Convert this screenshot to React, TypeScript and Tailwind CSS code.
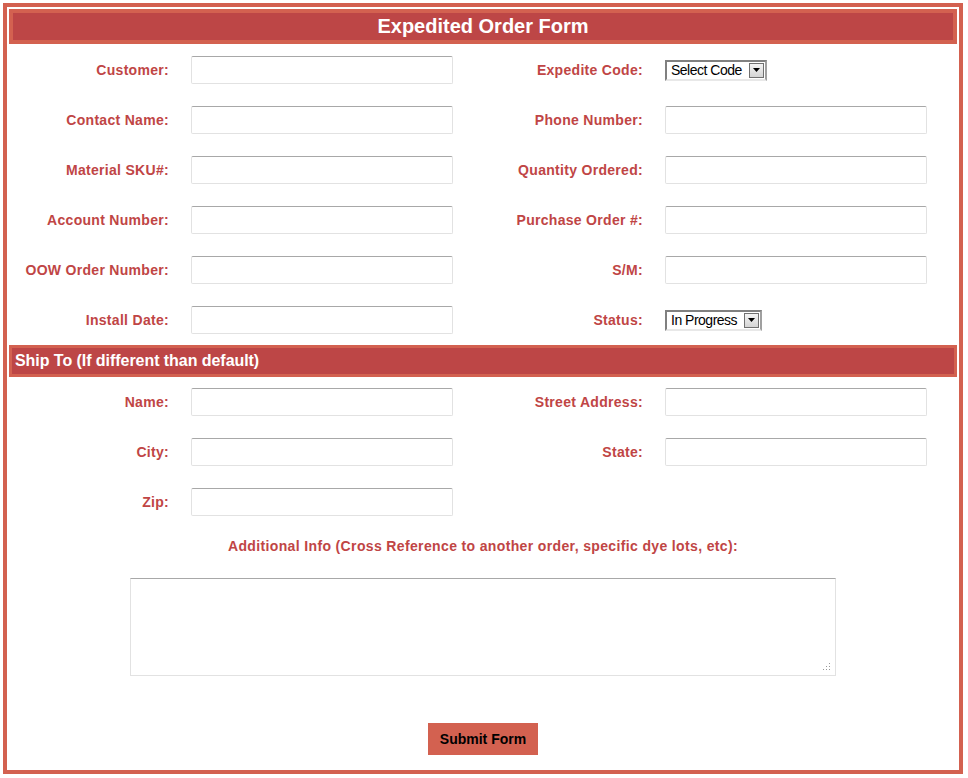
import React from "react";

const font = { fontFamily: '"Liberation Sans", Arial, sans-serif' };

function Input() {
  return (
    <div className="h-[28px] w-[262px] rounded-[2px] border border-[#e2e2e2] border-t-[#a8a8a8] bg-white" />
  );
}

function FakeSelect({ text, w }: { text: string; w: string }) {
  return (
    <div className={`flex h-[21px] items-center border-2 border-[#808080] border-b-[#e8e8e8] border-r-[#a0a0a0] bg-white ${w}`}>
      <span className="flex-1 pl-[4px] text-[14px] leading-none tracking-[-0.5px] text-black">{text}</span>
      <div className="mr-[1px] flex h-[15px] w-[15px] items-center justify-center border border-[#707070] bg-gradient-to-b from-[#f4f4f4] to-[#d4d4d4]">
        <svg width="7" height="4" viewBox="0 0 7 4"><path d="M0 0h7L3.5 4z" fill="#000" /></svg>
      </div>
    </div>
  );
}

function Field({ label, children }: { label: string; children?: React.ReactNode }) {
  return (
    <div className="flex h-[28px] w-[474px] items-center">
      <div className="w-[160px] text-right text-[14px] font-bold tracking-[0.3px] text-[#c04545]">{label}</div>
      <div className="ml-[22px] flex items-center">{children}</div>
    </div>
  );
}

function Row({ children }: { children: React.ReactNode }) {
  return <div className="flex">{children}</div>;
}

export default function App() {
  return (
    <div className="bg-white" style={font}>
      <div className="ml-[3px] mt-[3px] flex h-[771px] w-[960px] flex-col border-4 border-[#d36150] bg-white p-[2px]">
        <div className="flex h-[35px] items-center justify-center border-4 border-[#d36150] bg-[#bd4646] pb-[2px] text-[20px] font-bold text-white">
          Expedited Order Form
        </div>
        <div className="mt-[12px] flex flex-col gap-[22px]">
          <Row>
            <Field label="Customer:"><Input /></Field>
            <Field label="Expedite Code:"><FakeSelect text="Select Code" w="w-[102px]" /></Field>
          </Row>
          <Row>
            <Field label="Contact Name:"><Input /></Field>
            <Field label="Phone Number:"><Input /></Field>
          </Row>
          <Row>
            <Field label="Material SKU#:"><Input /></Field>
            <Field label="Quantity Ordered:"><Input /></Field>
          </Row>
          <Row>
            <Field label="Account Number:"><Input /></Field>
            <Field label="Purchase Order #:"><Input /></Field>
          </Row>
          <Row>
            <Field label="OOW Order Number:"><Input /></Field>
            <Field label="S/M:"><Input /></Field>
          </Row>
          <Row>
            <Field label="Install Date:"><Input /></Field>
            <Field label="Status:"><FakeSelect text="In Progress" w="w-[97px]" /></Field>
          </Row>
        </div>
        <div className="mt-[11px] flex h-[32px] items-center border-[3px] border-[#d36150] bg-[#bd4646] pl-[3px] text-[16px] font-bold tracking-[-0.05px] text-white">
          Ship To (If different than default)
        </div>
        <div className="mt-[11px] flex flex-col gap-[22px]">
          <Row>
            <Field label="Name:"><Input /></Field>
            <Field label="Street Address:"><Input /></Field>
          </Row>
          <Row>
            <Field label="City:"><Input /></Field>
            <Field label="State:"><Input /></Field>
          </Row>
          <Row>
            <Field label="Zip:"><Input /></Field>
          </Row>
        </div>
        <div className="mt-[20px] text-center text-[14px] font-bold tracking-[0.36px] text-[#c04545]">
          Additional Info (Cross Reference to another order, specific dye lots, etc):
        </div>
        <div className="mt-[21px] flex justify-center">
          <div className="relative h-[98px] w-[706px] border border-[#e2e2e2] border-t-[#a8a8a8]">
            <svg className="absolute bottom-[4px] right-[4px]" width="8" height="8" viewBox="0 0 8 8">
              <rect x="6" y="0" width="1" height="1" fill="#999" />
              <rect x="3" y="3" width="1" height="1" fill="#999" />
              <rect x="6" y="3" width="1" height="1" fill="#999" />
              <rect x="0" y="6" width="1" height="1" fill="#999" />
              <rect x="3" y="6" width="1" height="1" fill="#999" />
              <rect x="6" y="6" width="1" height="1" fill="#999" />
            </svg>
          </div>
        </div>
        <div className="mt-[47px] flex justify-center">
          <div className="flex h-[32px] w-[110px] items-center justify-center bg-[#d36150] text-[14px] font-bold text-black">
            Submit Form
          </div>
        </div>
      </div>
    </div>
  );
}
